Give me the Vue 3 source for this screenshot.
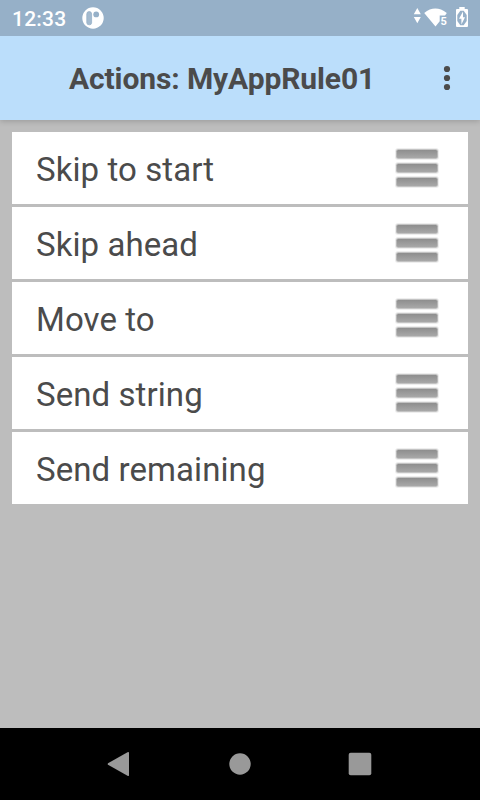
<script setup>
const actions = ['Skip to start', 'Skip ahead', 'Move to', 'Send string', 'Send remaining']
const bars = [5.2, 19.2, 33.2]
</script>

<template>
  <div class="screen">
    <header class="status">
      <span class="time">12:33</span>
      <svg class="notice" width="22" height="22" viewBox="0 0 22 22">
        <circle cx="11" cy="11" r="10.7" fill="#fff" />
        <path d="M4.8 7Q4.8 4.6 7.2 4.6Q9.6 4.6 9.6 7V15.8Q9.6 17.8 7.3 17.8Q4.8 17.8 4.8 15.8Z" fill="#a3bacf" stroke="#96b0c8" stroke-width="0.8" />
        <circle cx="14.2" cy="7.4" r="2.9" fill="#96b0c8" />
      </svg>
      <svg class="indicators" width="60" height="36" viewBox="0 0 60 36">
        <path d="M3.8 14.3L7.3 8.1L10.8 14.3ZM3.8 17L7.3 23.2L10.8 17Z" fill="#fff" />
        <path d="M14.2 13Q25.2 4.2 36.8 13L35 15.4H29.7V21.3L25.5 26.5Z" fill="#fff" />
        <text x="30.6" y="25" class="wifi-label">5</text>
        <path d="M49.3 7H54.7V9H57Q58 9 58 10V26Q58 27 57 27H47Q46 27 46 26V10Q46 9 47 9H49.3Z" fill="#fff" />
        <path d="M50.3 10.8H53.7L56.7 15V21L53.7 25.3H50.3L47.3 21V15Z" fill="#96b0c8" />
        <path d="M53 11.6L49 18.8H51.4V24.5L55 17.2H53Z" fill="#fff" />
      </svg>
    </header>
    <div class="toolbar">
      <h1>Actions: MyAppRule01</h1>
      <svg class="more" width="12" height="30" viewBox="0 0 12 30">
        <circle cx="6" cy="6" r="3.1" />
        <circle cx="6" cy="15" r="3.1" />
        <circle cx="6" cy="24" r="3.1" />
      </svg>
    </div>
    <main>
      <ul>
        <li v-for="action in actions" :key="action">
          <span class="label">{{ action }}</span>
          <svg class="handle" width="48" height="48" viewBox="0 0 48 48">
            <defs>
              <linearGradient id="bar" x1="0" y1="0" x2="0" y2="1">
                <stop offset="0" stop-color="#8e8e8e" />
                <stop offset="0.35" stop-color="#979797" />
                <stop offset="1" stop-color="#a8a8a8" />
              </linearGradient>
            </defs>
            <g v-for="y in bars" :key="y">
              <rect x="2.2" :y="y - 0.9" width="43.6" height="11.4" rx="2.5" fill="#dedede" opacity="0.7" />
              <rect x="3.1" :y="y" width="41.8" height="9.6" rx="2" fill="#b7b7b7" />
              <rect x="3.9" :y="y + 0.8" width="40.2" height="8" rx="1.5" fill="url(#bar)" />
            </g>
          </svg>
        </li>
      </ul>
    </main>
    <nav>
      <svg width="480" height="72" viewBox="0 0 480 72" fill="#999">
        <path d="M108 35.2L127.5 24.3Q129 23.6 129 24.8V47.2Q129 48.4 127.5 47.7L108 36.8Q107.4 36 108 35.2Z" />
        <circle cx="240" cy="36" r="10.7" />
        <rect x="348.7" y="24.7" width="22.6" height="22.6" rx="2" />
      </svg>
    </nav>
  </div>
</template>

<style>
body {
  margin: 0;
}
</style>

<style scoped>
.screen {
  display: flex;
  flex-direction: column;
  width: 480px;
  height: 800px;
  overflow: hidden;
  background: #bdbdbd;
  font-family: Roboto, sans-serif;
  color: #4b4b4b;
}
.status {
  display: flex;
  align-items: center;
  height: 36px;
  box-sizing: border-box;
  padding-left: 12px;
  background: #96b0c8;
  color: #fff;
}
.time {
  width: 70px;
  font-size: 21px;
  font-weight: 500;
  line-height: 36px;
  letter-spacing: 0.2px;
  padding-top: 2px;
}
.indicators {
  margin-left: auto;
  margin-right: 10px;
}
.wifi-label {
  font-size: 11px;
  font-weight: 700;
  fill: #fff;
}
.toolbar {
  display: flex;
  align-items: center;
  justify-content: space-between;
  height: 84px;
  box-sizing: border-box;
  padding: 0 27px 0 69px;
  background: #bbdefb;
  box-shadow: 0 1px 6px rgba(0, 0, 0, 0.2);
  clip-path: inset(0 0 -12px 0);
}
h1 {
  margin: 2px 0 0;
  font-size: 30px;
  font-weight: 700;
  line-height: 36px;
  letter-spacing: -0.11px;
  white-space: nowrap;
}
.more {
  fill: #4b4b4b;
}
main {
  flex: 1;
  padding: 12px;
}
ul {
  display: flex;
  flex-direction: column;
  gap: 3px;
  margin: 0;
  padding: 0;
  list-style: none;
}
li {
  display: flex;
  align-items: center;
  justify-content: space-between;
  height: 72px;
  box-sizing: border-box;
  padding: 0 27px 0 24px;
  background: #fff;
}
.label {
  font-size: 33px;
  line-height: 40px;
  padding-top: 3px;
  letter-spacing: 0.08px;
}
nav {
  height: 72px;
  background: #000;
}
nav svg {
  display: block;
}
</style>
